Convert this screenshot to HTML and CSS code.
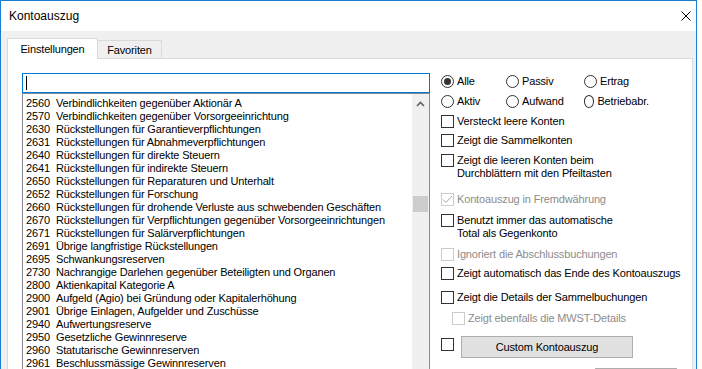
FILE: index.html
```html
<!DOCTYPE html>
<html lang="de">
<head>
  <meta charset="UTF-8" />
  <title>Kontoauszug</title>
  <link rel="stylesheet" href="styles.css">
</head>
<body>
  <div class="window">
    <div class="titlebar">
      <span class="title">Kontoauszug</span>
      <svg class="close" width="10" height="10" viewBox="0 0 10 10"><path d="M0.5 0.5L9.5 9.5M9.5 0.5L0.5 9.5" stroke="#000" stroke-width="1" fill="none"/></svg>
    </div>
    <div class="body">
      <div class="tabs">
        <div class="tab active">Einstellungen</div>
        <div class="tab">Favoriten</div>
      </div>
      <div class="panel">
        <div class="left">
          <div class="search"><span class="caret"></span></div>
          <div class="list">
            <div class="rows">
              <div class="row"><span class="num">2560</span>Verbindlichkeiten gegenüber Aktionär A</div>
              <div class="row"><span class="num">2570</span>Verbindlichkeiten gegenüber Vorsorgeeinrichtung</div>
              <div class="row"><span class="num">2630</span>Rückstellungen für Garantieverpflichtungen</div>
              <div class="row"><span class="num">2631</span>Rückstellungen für Abnahmeverpflichtungen</div>
              <div class="row"><span class="num">2640</span>Rückstellungen für direkte Steuern</div>
              <div class="row"><span class="num">2641</span>Rückstellungen für indirekte Steuern</div>
              <div class="row"><span class="num">2650</span>Rückstellungen für Reparaturen und Unterhalt</div>
              <div class="row"><span class="num">2652</span>Rückstellungen für Forschung</div>
              <div class="row"><span class="num">2660</span>Rückstellungen für drohende Verluste aus schwebenden Geschäften</div>
              <div class="row"><span class="num">2670</span>Rückstellungen für Verpflichtungen gegenüber Vorsorgeeinrichtungen</div>
              <div class="row"><span class="num">2671</span>Rückstellungen für Salärverpflichtungen</div>
              <div class="row"><span class="num">2691</span>Übrige langfristige Rückstellungen</div>
              <div class="row"><span class="num">2695</span>Schwankungsreserven</div>
              <div class="row"><span class="num">2730</span>Nachrangige Darlehen gegenüber Beteiligten und Organen</div>
              <div class="row"><span class="num">2800</span>Aktienkapital Kategorie A</div>
              <div class="row"><span class="num">2900</span>Aufgeld (Agio) bei Gründung oder Kapitalerhöhung</div>
              <div class="row"><span class="num">2901</span>Übrige Einlagen, Aufgelder und Zuschüsse</div>
              <div class="row"><span class="num">2940</span>Aufwertungsreserve</div>
              <div class="row"><span class="num">2950</span>Gesetzliche Gewinnreserve</div>
              <div class="row"><span class="num">2960</span>Statutarische Gewinnreserven</div>
              <div class="row"><span class="num">2961</span>Beschlussmässige Gewinnreserven</div>
            </div>
            <div class="scrollbar">
              <div class="arrow">
                <svg width="9" height="6" viewBox="0 0 9 6"><path d="M1 5L4.5 1.5L8 5" stroke="#606060" stroke-width="1.6" fill="none"/></svg>
              </div>
              <div class="thumb"></div>
            </div>
          </div>
        </div>

        <div class="options">
          <div class="radios r1">
            <label class="radio"><span class="dot checked"></span>Alle</label>
            <label class="radio wide"><span class="dot"></span>Passiv</label>
            <label class="radio"><span class="dot"></span>Ertrag</label>
          </div>
          <div class="radios r2">
            <label class="radio"><span class="dot"></span>Aktiv</label>
            <label class="radio wide"><span class="dot"></span>Aufwand</label>
            <label class="radio"><span class="dot"></span>Betriebabr.</label>
          </div>

          <div class="check c1"><span class="box"></span><span>Versteckt leere Konten</span></div>
          <div class="check c2"><span class="box"></span><span>Zeigt die Sammelkonten</span></div>
          <div class="check c3"><span class="box"></span><span>Zeigt die leeren Konten beim<br>Durchblättern mit den Pfeiltasten</span></div>
          <div class="check c4 disabled">
            <span class="box"><svg width="11" height="11" viewBox="0 0 11 11"><path d="M1 5.5L4 8.5L10 2" stroke="#a8a8a8" stroke-width="1" fill="none"/></svg></span>
            <span>Kontoauszug in Fremdwährung</span>
          </div>
          <div class="check c5"><span class="box"></span><span>Benutzt immer das automatische<br>Total als Gegenkonto</span></div>
          <div class="check c6 disabled"><span class="box"></span><span>Ignoriert die Abschlussbuchungen</span></div>
          <div class="check c7"><span class="box"></span><span>Zeigt automatisch das Ende des Kontoauszugs</span></div>
          <div class="check c8"><span class="box"></span><span>Zeigt die Details der Sammelbuchungen</span></div>
          <div class="check c9 disabled sub"><span class="box"></span><span>Zeigt ebenfalls die MWST-Details</span></div>
          <div class="custom">
            <span class="box"></span>
            <button class="btn">Custom Kontoauszug</button>
          </div>
          <button class="btn ok"></button>
        </div>
      </div>
    </div>
  </div>
</body>
</html>
```

FILE: styles.css
```css
body {
  margin: 0;
  background: #fff;
  font-family: "Liberation Sans", Arial, sans-serif;
  font-size: 11px;
  letter-spacing: -0.15px;
  color: #000;
  overflow: hidden;
  height: 369px;
}

.window {
  width: 697px;
  height: 369px;
  box-sizing: border-box;
  border: 1px solid #1a7cd0;
  border-bottom: none;
  display: flex;
  flex-direction: column;
  overflow: hidden;
}

.titlebar {
  height: 30px;
  background: #fff;
  display: flex;
  align-items: center;
  justify-content: space-between;
  padding: 0 5px 0 8px;
  flex-shrink: 0;
}

.title {
  font-size: 12px;
  letter-spacing: 0;
}

.close {
  margin-top: -1px;
}

.body {
  flex: 1;
  background: #f0f0f0;
  padding: 7px 3px 0 6px;
  display: flex;
  flex-direction: column;
  min-height: 0;
}

.tabs {
  display: flex;
  align-items: flex-end;
  flex-shrink: 0;
}

.tab {
  box-sizing: border-box;
  display: flex;
  align-items: center;
  justify-content: center;
}

.tab.active {
  position: relative;
  z-index: 1;
  width: 91px;
  height: 21px;
  margin-bottom: -1px;
  background: #fff;
  border: 1px solid #d9d9d9;
  border-bottom: none;
  padding-bottom: 1px;
}

.tab:not(.active) {
  width: 64px;
  height: 18px;
  background: #f0f0f0;
  border-top: 1px solid #d9d9d9;
  border-right: 1px solid #d9d9d9;
  padding-top: 1px;
}

.panel {
  height: 340px;
  flex-shrink: 0;
  background: #fff;
  border: 1px solid #d9d9d9;
  padding: 14px 0 0 14px;
  display: flex;
}

.left {
  width: 408px;
  display: flex;
  flex-direction: column;
}

.search {
  height: 20px;
  box-sizing: border-box;
  border: 1px solid #0078d7;
  padding: 2px 0 0 3px;
}

.caret {
  display: block;
  width: 1px;
  height: 14px;
  background: #000;
}

.list {
  flex: 1;
  border: 1px solid #828790;
  display: flex;
}

.rows {
  flex: 1;
  padding: 3px 0 0 3px;
  overflow: hidden;
}

.row {
  height: 13px;
  line-height: 13px;
  white-space: nowrap;
}

.num {
  display: inline-block;
  width: 30px;
}

.scrollbar {
  width: 17px;
  background: #f0f0f0;
  display: flex;
  flex-direction: column;
  align-items: center;
}

.arrow {
  height: 17px;
  display: flex;
  align-items: center;
  justify-content: center;
  padding-top: 2px;
  box-sizing: border-box;
}

.thumb {
  width: 15px;
  height: 16px;
  margin-top: 85px;
  background: #cdcdcd;
}

.options {
  margin-left: 11px;
  width: 251px;
  display: flex;
  flex-direction: column;
}

.radios {
  display: flex;
  height: 13px;
  line-height: 13px;
}

.r1 { margin-top: 2px; }
.r2 { margin-top: 7px; }

.radio {
  width: 65px;
  display: flex;
  align-items: center;
  gap: 3px;
}

.radio.wide {
  width: 78px;
}

.dot {
  width: 13px;
  height: 13px;
  box-sizing: border-box;
  border: 1px solid #333;
  border-radius: 50%;
  display: flex;
  align-items: center;
  justify-content: center;
}

.dot.checked::after {
  content: "";
  width: 7px;
  height: 7px;
  border-radius: 50%;
  background: #333;
}

.check {
  display: flex;
  align-items: flex-start;
  gap: 3px;
  line-height: 13px;
  white-space: nowrap;
}

.box {
  width: 13px;
  height: 13px;
  box-sizing: border-box;
  border: 1px solid #333;
  background: #fff;
  flex-shrink: 0;
  display: flex;
  align-items: center;
  justify-content: center;
}

.disabled {
  color: #8c8c8c;
}

.disabled .box {
  border-color: #cccccc;
}

.sub {
  margin-left: 11px;
}

.c1 { margin-top: 7px; }
.c2 { margin-top: 6px; }
.c3 { margin-top: 7px; }
.c4 { margin-top: 13px; }
.c5 { margin-top: 8px; }
.c6 { margin-top: 8px; }
.c7 { margin-top: 6px; }
.c8 { margin-top: 11px; }
.c9 { margin-top: 8px; }

.custom {
  margin-top: 11px;
  display: flex;
  align-items: flex-start;
}

.custom .box {
  margin-top: 2px;
}

.btn {
  font-family: "Liberation Sans", Arial, sans-serif;
  font-size: 11px;
  letter-spacing: -0.15px;
  color: #000;
  background: #e1e1e1;
  border: 1px solid #adadad;
  height: 22px;
  padding: 0;
  flex-shrink: 0;
}

.custom .btn {
  width: 172px;
  margin-left: 7px;
}

.btn.ok {
  width: 82px;
  margin-top: 10px;
  margin-left: 154px;
}
```
